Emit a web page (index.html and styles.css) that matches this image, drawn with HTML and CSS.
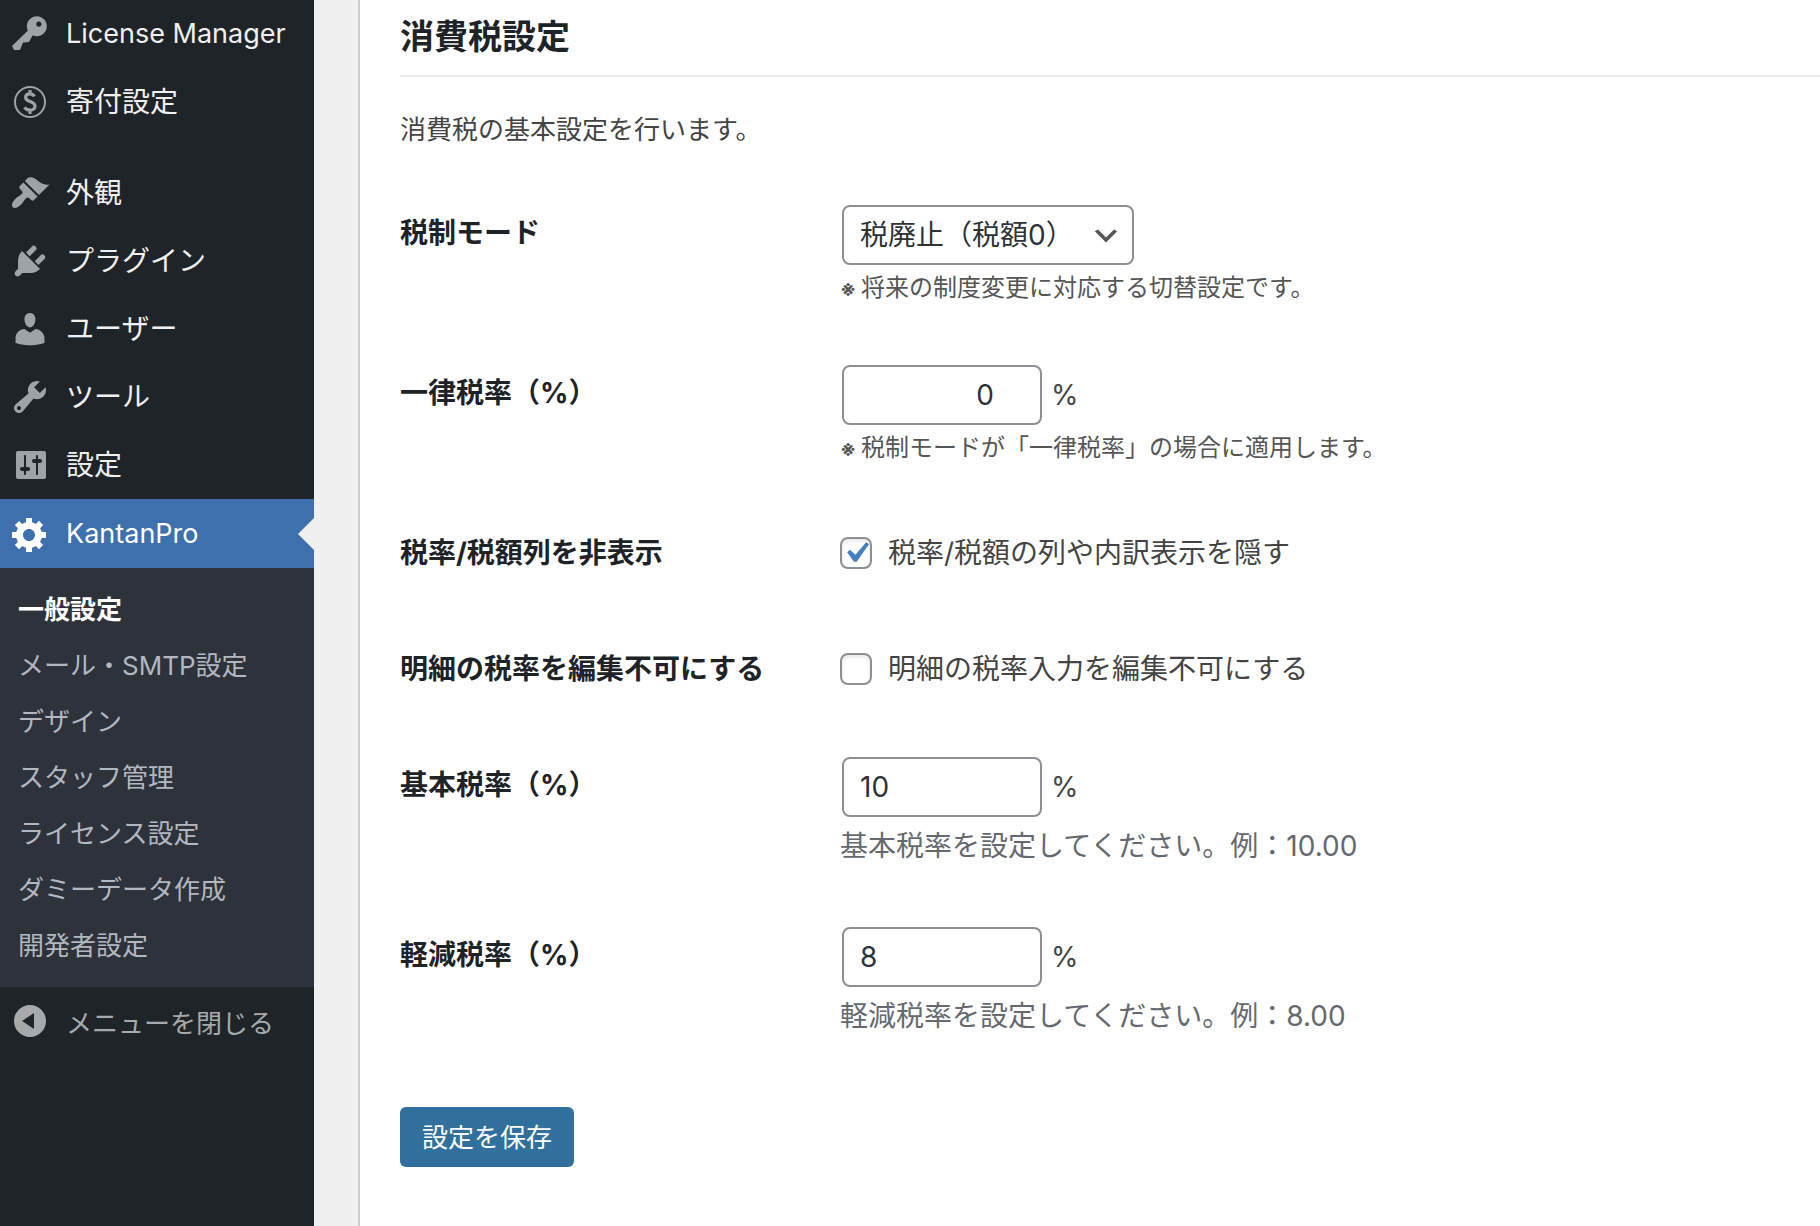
FILE: index.html
```html
<!DOCTYPE html>
<html lang="ja">
<head>
<meta charset="utf-8">
<meta name="viewport" content="width=device-width, initial-scale=1">
<title>消費税設定 - KantanPro</title>
<link rel="stylesheet" href="styles.css">
</head>
<body>
<div class="layout">
  <nav class="sidebar" aria-label="管理メニュー">
    <ul class="menu">
      <li><a class="menu-link latin" href="#"><svg class="icon" viewBox="0 0 20 20"><path d="M16.95 2.58c1.96 1.95 1.96 5.12 0 7.07-1.51 1.51-3.75 1.84-5.59 1.01l-1.87 3.31-2.99.31L5 18H2l-1-2 7.95-7.69c-.92-1.87-.62-4.18.93-5.73 1.95-1.96 5.12-1.96 7.07 0zm-2.51 3.79c.74 0 1.33-.6 1.33-1.34 0-.73-.59-1.33-1.33-1.33-.73 0-1.33.6-1.33 1.33 0 .74.6 1.34 1.33 1.34z"/></svg>License Manager</a></li>
      <li><a class="menu-link" href="#"><svg class="icon icon-line" viewBox="0 0 20 20"><circle cx="10" cy="10" r="7.5"/><path class="thick" d="M12.300 7.100C11.700 6.300 10.900 5.900 10 5.900c-1.300 0-2.200.7-2.200 1.800 0 2.500 4.700 1.700 4.700 4.400 0 1.200-1.100 2-2.400 2-1.200 0-2.200-.5-2.800-1.400M10 4v2M10 14v2"/></svg>寄付設定</a></li>
      <li class="after-gap"><a class="menu-link" href="#"><svg class="icon" viewBox="0 0 20 20"><path d="M14.48 11.06L7.41 3.99l1.5-1.5c.5-.56 2.3-.47 3.51.32 1.21.8 1.43 1.28 2.91 2.1 1.18.64 2.45 1.26 4.45.85zm-.71.71L6.7 4.7 4.93 6.47c-.39.39-.39 1.02 0 1.41l1.06 1.06c.39.39.39 1.03 0 1.42-.6.6-1.43 1.11-2.21 1.69-.35.26-.7.53-1.01.84C1.43 14.23.4 16.08 1.4 17.07c.99 1 2.84-.03 4.18-1.36.31-.31.58-.66.85-1.02.57-.78 1.08-1.61 1.69-2.21.39-.39 1.02-.39 1.41 0l1.06 1.06c.39.39 1.02.39 1.41 0z"/></svg>外観</a></li>
      <li><a class="menu-link" href="#"><svg class="icon" viewBox="0 0 20 20"><path d="M13.11 4.36L9.87 7.6 8 5.73l3.24-3.24c.35-.34 1.05-.2 1.56.32.52.51.66 1.21.31 1.55zm-8 1.77l.91-1.12 9.01 9.01-1.19.84c-.71.71-2.63 1.16-3.82 1.16H6.14L4.9 17.26c-.59.59-1.54.59-2.12 0-.59-.58-.59-1.53 0-2.12l1.24-1.24v-3.88c0-1.13.4-3.19 1.09-3.89zm7.26 3.97l3.24-3.24c.34-.35 1.04-.21 1.55.31.52.51.66 1.21.31 1.55l-3.24 3.25z"/></svg>プラグイン</a></li>
      <li><a class="menu-link" href="#"><svg class="icon" viewBox="0 0 20 20"><path d="M10 9.25c-2.27 0-2.73-3.44-2.73-3.44C7 4.02 7.82 2 9.97 2c2.16 0 2.98 2.02 2.71 3.81 0 0-.41 3.44-2.68 3.44zm0 2.57L12.72 10c2.39 0 4.52 2.33 4.52 4.53v2.49s-3.65 1.13-7.24 1.13c-3.65 0-7.24-1.13-7.24-1.13v-2.49c0-2.25 1.94-4.48 4.47-4.48z"/></svg>ユーザー</a></li>
      <li><a class="menu-link" href="#"><svg class="icon" viewBox="0 0 20 20"><path d="M16.68 9.77c-1.34 1.34-3.3 1.67-4.95.99l-5.41 6.52c-.99.99-2.59.99-3.58 0s-.99-2.59 0-3.57l6.52-5.42c-.68-1.65-.35-3.61.99-4.95 1.28-1.28 3.12-1.62 4.72-1.06l-2.89 2.89 2.82 2.82 2.86-2.87c.53 1.58.18 3.39-1.08 4.65zM3.81 16.21c.4.39 1.04.39 1.43 0 .4-.4.4-1.04 0-1.43-.39-.4-1.03-.4-1.43 0-.39.39-.39 1.03 0 1.43z"/></svg>ツール</a></li>
      <li><a class="menu-link" href="#"><svg class="icon" viewBox="0 0 20 20"><path fill-rule="evenodd" d="M18 16V4c0-.55-.45-1-1-1H4c-.55 0-1 .45-1 1v12c0 .55.45 1 1 1h13c.55 0 1-.45 1-1zM8 11h1c.55 0 1 .45 1 1s-.45 1-1 1H8v1.5c0 .28-.22.5-.5.5s-.5-.22-.5-.5V13H6c-.55 0-1-.45-1-1s.45-1 1-1h1V5.500c0-.28.22-.5.5-.5s.5.22.5.5V11zm5-2h-1c-.55 0-1-.45-1-1s.45-1 1-1h1V5.500c0-.28.22-.5.5-.5s.5.22.5.5V7h1c.55 0 1 .45 1 1s-.45 1-1 1h-1v5.500c0 .28-.22.5-.5.5s-.5-.22-.5-.5V9z"/></svg>設定</a></li>
      <li>
        <a class="menu-link latin current" href="#" aria-current="true"><svg class="icon" viewBox="0 0 20 20"><path d="M18 12h-2.180c-.17.7-.44 1.350-.81 1.930l1.540 1.540-2.100 2.100-1.540-1.540c-.58.36-1.230.63-1.910.79V19H8v-2.180c-.68-.16-1.330-.43-1.910-.79l-1.540 1.540-2.120-2.120 1.540-1.540c-.36-.58-.63-1.230-.79-1.910H1V9.030h2.170c.16-.7.44-1.350.8-1.940L2.430 5.550l2.100-2.100 1.540 1.540c.58-.37 1.240-.64 1.930-.81V2h3v2.180c.68.16 1.330.43 1.910.79l1.540-1.540 2.120 2.120-1.540 1.540c.36.59.64 1.240.8 1.940H18V12zm-8.500 1.500c1.660 0 3-1.340 3-3s-1.340-3-3-3-3 1.340-3 3 1.340 3 3 3z"/></svg>KantanPro</a>
        <ul class="submenu">
          <li><a class="active" href="#">一般設定</a></li>
          <li><a href="#">メール・SMTP設定</a></li>
          <li><a href="#">デザイン</a></li>
          <li><a href="#">スタッフ管理</a></li>
          <li><a href="#">ライセンス設定</a></li>
          <li><a href="#">ダミーデータ作成</a></li>
          <li><a href="#">開発者設定</a></li>
        </ul>
      </li>
    </ul>
    <button class="collapse" type="button"><svg class="icon" viewBox="0 0 20 20"><path fill-rule="evenodd" d="M10 2a8 8 0 1 1 0 16a8 8 0 1 1 0-16zM12 14V6l-6 4z"/></svg>メニューを閉じる</button>
  </nav>

  <main class="panel">
    <h2 class="title">消費税設定</h2>
    <p class="intro">消費税の基本設定を行います。</p>
    <form>
      <div class="row">
        <label class="name" for="tax-mode">税制モード</label>
        <div class="field">
          <div class="control">
            <span class="select-wrap">
              <select class="box select" id="tax-mode"><option>税廃止（税額0）</option></select>
              <svg class="chevron" viewBox="0 0 20 20"><path d="M5 6l5 5 5-5 2 1-7 7-7-7 2-1z"/></svg>
            </span>
          </div>
          <p class="note"><span class="mark">※ </span>将来の制度変更に対応する切替設定です。</p>
        </div>
      </div>
      <div class="row">
        <label class="name" for="flat-rate">一律税率（%）</label>
        <div class="field">
          <div class="control"><input class="box number right" id="flat-rate" type="number" value="0"><span>%</span></div>
          <p class="note"><span class="mark">※ </span>税制モードが「一律税率」の場合に適用します。</p>
        </div>
      </div>
      <div class="row">
        <span class="name">税率/税額列を非表示</span>
        <div class="field">
          <label class="tick"><input type="checkbox" checked>税率/税額の列や内訳表示を隠す</label>
        </div>
      </div>
      <div class="row">
        <span class="name">明細の税率を編集不可にする</span>
        <div class="field">
          <label class="tick"><input type="checkbox">明細の税率入力を編集不可にする</label>
        </div>
      </div>
      <div class="row">
        <label class="name" for="base-rate">基本税率（%）</label>
        <div class="field">
          <div class="control"><input class="box number" id="base-rate" type="number" value="10"><span>%</span></div>
          <p class="description">基本税率を設定してください。例：10.00</p>
        </div>
      </div>
      <div class="row">
        <label class="name" for="reduced-rate">軽減税率（%）</label>
        <div class="field">
          <div class="control"><input class="box number" id="reduced-rate" type="number" value="8"><span>%</span></div>
          <p class="description">軽減税率を設定してください。例：8.00</p>
        </div>
      </div>
      <button class="save" type="submit">設定を保存</button>
    </form>
  </main>
</div>
</body>
</html>
```
FILE: styles.css
```css
* {
  box-sizing: border-box;
}

body {
  margin: 0;
  background: #f0f0f1;
  color: #3c434a;
  font-family: Inter, "Noto Sans CJK JP", sans-serif;
  font-size: 28px;
  line-height: 40px;
}

h2, p, ul {
  margin: 0;
  padding: 0;
}

ul {
  list-style: none;
}

input, select, button {
  font-family: inherit;
}

.layout {
  display: flex;
  min-height: 100vh;
}

/* Sidebar */
.sidebar {
  flex: 0 0 314px;
  background: #1f2428;
}

.menu-link, .collapse {
  display: flex;
  align-items: center;
  gap: 16px;
  width: 100%;
  height: 68px;
  padding: 0 10px;
  color: #f0f0f1;
  text-decoration: none;
  white-space: nowrap;
}

.latin {
  font-size: 27px;
}

.after-gap {
  margin-top: 23px;
}

.icon {
  flex: none;
  width: 40px;
  height: 40px;
  fill: #9ea3a8;
}

.icon-line {
  fill: none;
  stroke: #9ea3a8;
  stroke-width: 1;
}

.icon-line .thick {
  stroke-width: 1.6;
}

.current {
  position: relative;
  height: 69px;
  background: #3d70ad;
  color: #fff;
}

.current .icon {
  fill: #fff;
}

.current::after {
  content: "";
  position: absolute;
  top: 50%;
  right: 0;
  margin-top: -16px;
  border: 16px solid transparent;
  border-left: 0;
  border-right-color: #f0f0f1;
}

.submenu {
  padding: 14px 0 13px;
  background: #2e323a;
  font-size: 26px;
}

.submenu a {
  display: block;
  padding: 8px 18px;
  color: #b2b7c0;
  text-decoration: none;
}

.submenu .active {
  color: #fff;
  font-weight: 700;
}

.collapse {
  border: 0;
  background: none;
  color: #a7aaad;
  font-size: 26px;
}

.collapse .icon {
  fill: #a7aaad;
}

/* Settings panel */
.panel {
  flex: 1;
  min-width: 0;
  margin-left: 44px;
  padding: 15px 0 60px 40px;
  border-left: 2px solid #c9ccd0;
  background: #fff;
}

.title {
  padding-bottom: 16px;
  border-bottom: 2px solid #eee;
  color: #1d2327;
  font-size: 34px;
  line-height: 44px;
}

.intro {
  margin: 33px 0 25px;
  color: #444;
  font-size: 26px;
}

.row {
  display: grid;
  grid-template-columns: 440px 1fr;
}

.name {
  padding-top: 41px;
  color: #1d2327;
  font-weight: 700;
  line-height: 34px;
}

.field {
  padding: 30px 0;
  color: #444;
}

.control {
  display: flex;
  align-items: center;
  gap: 9px;
  padding-left: 2px;
}

.box {
  height: 60px;
  padding: 0 16px;
  border: 2px solid #8c8f94;
  border-radius: 8px;
  background: #fff;
  color: #2c3338;
  font-size: 28px;
  appearance: none;
}

.select-wrap {
  position: relative;
}

.select {
  display: block;
  width: 292px;
}

.chevron {
  position: absolute;
  top: 15px;
  right: 12px;
  width: 32px;
  height: 32px;
  fill: #555;
  pointer-events: none;
}

.number {
  width: 200px;
  appearance: textfield;
}

.number::-webkit-inner-spin-button {
  appearance: none;
  margin: 0;
}

.right {
  padding-right: 46px;
  text-align: right;
}

.note {
  margin-top: 6px;
  color: #555;
  font-size: 24px;
  line-height: 34px;
}

.mark {
  font-size: 20px;
  font-weight: 700;
  line-height: 20px;
}

.description {
  margin-top: 8px;
  color: #646970;
  line-height: 42px;
}

.tick {
  display: flex;
  align-items: center;
  gap: 16px;
  width: fit-content;
  height: 56px;
}

.tick input {
  width: 32px;
  height: 32px;
  margin: 0;
  border: 2px solid #8c8f94;
  border-radius: 8px;
  background: #fff center / 42px no-repeat;
  box-shadow: inset 0 2px 4px rgba(0, 0, 0, 0.1);
  appearance: none;
}

.tick input:checked {
  background-image: url("data:image/svg+xml,%3Csvg xmlns='http://www.w3.org/2000/svg' viewBox='0 0 20 20'%3E%3Cpath fill='%234480c0' d='M14.83 4.89l1.34.94-5.81 8.38H9.02L5.78 9.67l1.34-1.25 2.57 2.4z'/%3E%3C/svg%3E");
}

.save {
  height: 60px;
  margin-top: 40px;
  padding: 0 22px 4px;
  border: 0;
  border-radius: 6px;
  background: #316f9c;
  color: #fff;
  font-size: 26px;
}
```
